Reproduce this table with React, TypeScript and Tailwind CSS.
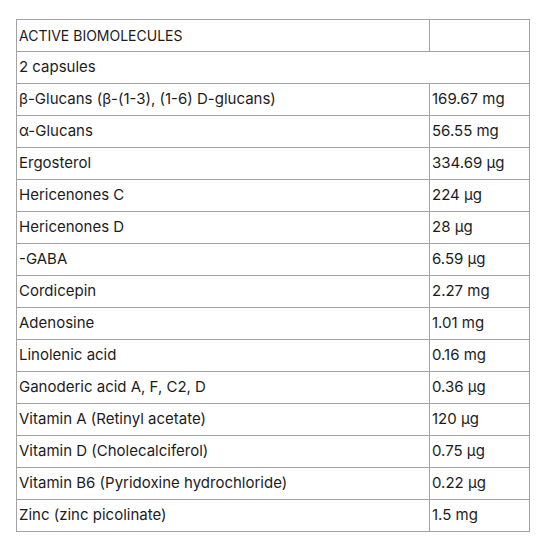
const rows: [string, string][] = [
  ["β-Glucans (β-(1-3), (1-6) D-glucans)", "169.67 mg"],
  ["α-Glucans", "56.55 mg"],
  ["Ergosterol", "334.69 µg"],
  ["Hericenones C", "224 µg"],
  ["Hericenones D", "28 µg"],
  ["-GABA", "6.59 µg"],
  ["Cordicepin", "2.27 mg"],
  ["Adenosine", "1.01 mg"],
  ["Linolenic acid", "0.16 mg"],
  ["Ganoderic acid A, F, C2, D", "0.36 µg"],
  ["Vitamin A (Retinyl acetate)", "120 µg"],
  ["Vitamin D (Cholecalciferol)", "0.75 µg"],
  ["Vitamin B6 (Pyridoxine hydrochloride)", "0.22 µg"],
  ["Zinc (zinc picolinate)", "1.5 mg"],
];

const cell = "border border-[#a3a3a3] h-[32px] px-[2px] py-0 align-middle";

export default function App() {
  return (
    <main className="min-h-[550px] bg-white pt-[19px] pl-[16px] font-['Inter',sans-serif] text-[15px] text-[#1c1c1c]">
      <table className="w-[513px] border-collapse table-fixed">
        <colgroup>
          <col className="w-[413px]" />
          <col className="w-[100px]" />
        </colgroup>
        <tbody>
          <tr>
            <td className={`${cell} text-[14px]`}>ACTIVE BIOMOLECULES</td>
            <td className={cell}></td>
          </tr>
          <tr>
            <td className={cell} colSpan={2}>
              2 capsules
            </td>
          </tr>
          {rows.map(([name, amount]) => (
            <tr key={name}>
              <td className={cell}>{name}</td>
              <td className={cell}>{amount}</td>
            </tr>
          ))}
        </tbody>
      </table>
    </main>
  );
}
